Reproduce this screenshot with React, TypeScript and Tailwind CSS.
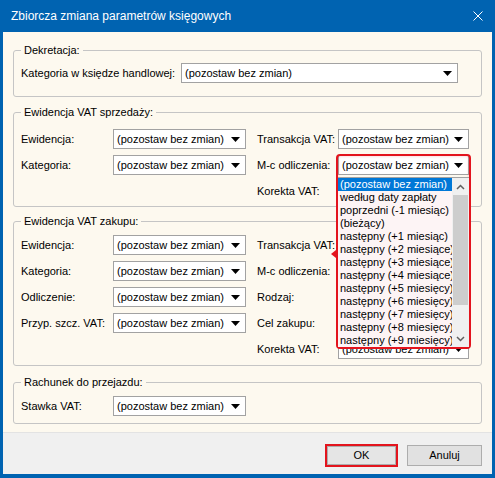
import React from 'react';

const ITEMS = [
  '(pozostaw bez zmian)',
  'według daty zapłaty',
  'poprzedni (-1 miesiąc)',
  '(bieżący)',
  'następny (+1 miesiąc)',
  'następny (+2 miesiące)',
  'następny (+3 miesiące)',
  'następny (+4 miesiące)',
  'następny (+5 miesięcy)',
  'następny (+6 miesięcy)',
  'następny (+7 miesięcy)',
  'następny (+8 miesięcy)',
  'następny (+9 miesięcy)',
];

function Arrow() {
  return (
    <svg width="9" height="5" viewBox="0 0 9 5" className="shrink-0">
      <polygon points="0,0 9,0 4.5,5" fill="#000" />
    </svg>
  );
}

function Combo({ className }: { className: string }) {
  return (
    <div className={`flex h-[20px] items-center border border-[#a2a2a2] bg-white pl-[3px] pr-[5px] ${className}`}>
      <span className="flex-1 whitespace-nowrap text-[11px] leading-none text-black">(pozostaw bez zmian)</span>
      <Arrow />
    </div>
  );
}

function Field({ label, labelW, comboW }: { label: string; labelW: string; comboW: string }) {
  return (
    <div className="flex h-[20px] items-center">
      <span className={`${labelW} shrink-0 whitespace-nowrap text-[11px] text-black`}>{label}</span>
      <Combo className={comboW} />
    </div>
  );
}

function Group({ title, className, children }: { title: string; className: string; children: React.ReactNode }) {
  return (
    <fieldset className={`rounded-[3px] border border-[#c5c5c5] px-[7px] ${className}`}>
      <legend className="px-[3px] text-[11px] leading-[14px] text-black">{title}</legend>
      {children}
    </fieldset>
  );
}

function Chevron({ up }: { up?: boolean }) {
  return (
    <svg width="9" height="6" viewBox="0 0 9 6">
      <polyline
        points={up ? '1,5 4.5,1.5 8,5' : '1,1 4.5,4.5 8,1'}
        fill="none"
        stroke="#606060"
        strokeWidth="1.5"
      />
    </svg>
  );
}

// rozwinięta lista M-c odliczenia (z czerwonym obramowaniem z oryginalnego zrzutu)
function DropList() {
  return (
    <div className="pointer-events-none absolute left-[336px] top-[154px] flex h-[195px] w-[135px] flex-col rounded-[4px] border-2 border-[#e3141d] shadow-[inset_0_0_3px_rgba(227,20,29,0.25)]">
      <span className="absolute left-[-7px] top-[94px] h-0 w-0 border-y-[4px] border-r-[5px] border-y-transparent border-r-[#e3141d]" />
      <div className="h-[21px] shrink-0" />
      <div className="flex flex-1 overflow-hidden border-t border-[#a2a2a2] bg-[#fdf4f5]">
        <div className="flex w-[114px] flex-col">
          {ITEMS.map((t, i) => (
            <div
              key={t}
              className={`h-[13px] shrink-0 whitespace-nowrap pl-[2px] text-[11px] leading-[13px] ${
                i === 0 ? 'bg-[#0078d7] text-white' : 'text-black'
              }`}
            >
              {t}
            </div>
          ))}
        </div>
        <div className="flex w-[17px] flex-col bg-[#f0f0f0]">
          <div className="flex h-[17px] items-center justify-center">
            <Chevron up />
          </div>
          <div className="mx-[1px] h-[110px] bg-[#cdcdcd]" />
          <div className="flex-1" />
          <div className="flex h-[16px] items-center justify-center">
            <Chevron />
          </div>
        </div>
      </div>
    </div>
  );
}

export default function App() {
  return (
    <div className="relative flex h-[478px] w-[495px] flex-col bg-[#0063b1] font-['Liberation_Sans',Arial,sans-serif]">
      <div className="flex h-[32px] shrink-0 items-center justify-between pl-[11px] pr-[12px]">
        <span className="text-[12px] text-white">Zbiorcza zmiana parametrów księgowych</span>
        <svg width="10" height="10" viewBox="0 0 10 10">
          <path d="M0.5 0.5 L9.5 9.5 M9.5 0.5 L0.5 9.5" stroke="#fff" strokeWidth="1" />
        </svg>
      </div>
      <div className="mx-[3px] mb-[4px] flex flex-1 flex-col">
        <div className="flex h-[400px] flex-col bg-[#fdf9ef] px-[10px] pt-[11px]">
          <Group title="Dekretacja:" className="pb-[13px] pt-[6px]">
            <Field label="Kategoria w księdze handlowej:" labelW="w-[160px]" comboW="w-[277px]" />
          </Group>

          <Group title="Ewidencja VAT sprzedaży:" className="mt-[8px] pb-[5px] pt-[10px]">
            <div className="flex gap-[11px]">
              <div className="flex flex-col gap-[6px]">
                <Field label="Ewidencja:" labelW="w-[92px]" comboW="w-[133px]" />
                <Field label="Kategoria:" labelW="w-[92px]" comboW="w-[133px]" />
              </div>
              <div className="flex flex-col gap-[6px]">
                <Field label="Transakcja VAT:" labelW="w-[81px]" comboW="w-[131px]" />
                <Field label="M-c odliczenia:" labelW="w-[81px]" comboW="w-[131px]" />
                <Field label="Korekta VAT:" labelW="w-[81px]" comboW="w-[131px]" />
              </div>
            </div>
          </Group>

          <Group title="Ewidencja VAT zakupu:" className="mt-[7px] pb-[6px] pt-[7px]">
            <div className="flex gap-[11px]">
              <div className="flex flex-col gap-[6px]">
                <Field label="Ewidencja:" labelW="w-[92px]" comboW="w-[133px]" />
                <Field label="Kategoria:" labelW="w-[92px]" comboW="w-[133px]" />
                <Field label="Odliczenie:" labelW="w-[92px]" comboW="w-[133px]" />
                <Field label="Przyp. szcz. VAT:" labelW="w-[92px]" comboW="w-[133px]" />
              </div>
              <div className="flex flex-col gap-[6px]">
                <Field label="Transakcja VAT:" labelW="w-[81px]" comboW="w-[131px]" />
                <Field label="M-c odliczenia:" labelW="w-[81px]" comboW="w-[131px]" />
                <Field label="Rodzaj:" labelW="w-[81px]" comboW="w-[131px]" />
                <Field label="Cel zakupu:" labelW="w-[81px]" comboW="w-[131px]" />
                <Field label="Korekta VAT:" labelW="w-[81px]" comboW="w-[131px]" />
              </div>
            </div>
          </Group>

          <Group title="Rachunek do przejazdu:" className="mt-[9px] pb-[7px] pt-[7px]">
            <Field label="Stawka VAT:" labelW="w-[92px]" comboW="w-[133px]" />
          </Group>
        </div>
        <div className="flex flex-1 items-start justify-end gap-[9px] border-t border-[#e3e3e3] bg-[#f0f0f0] pr-[10px] pt-[11px]">
          <div className="h-[23px] w-[73px] border-2 border-[#e3141d]">
            <div className="flex h-full w-full items-center justify-center border border-[#adadad] bg-[#e5e5e5] text-[11px] text-black">
              OK
            </div>
          </div>
          <div className="mt-[1px] flex h-[21px] w-[75px] items-center justify-center border border-[#adadad] bg-[#e1e1e1] text-[11px] text-black">
            Anuluj
          </div>
        </div>
      </div>
      <DropList />
    </div>
  );
}
